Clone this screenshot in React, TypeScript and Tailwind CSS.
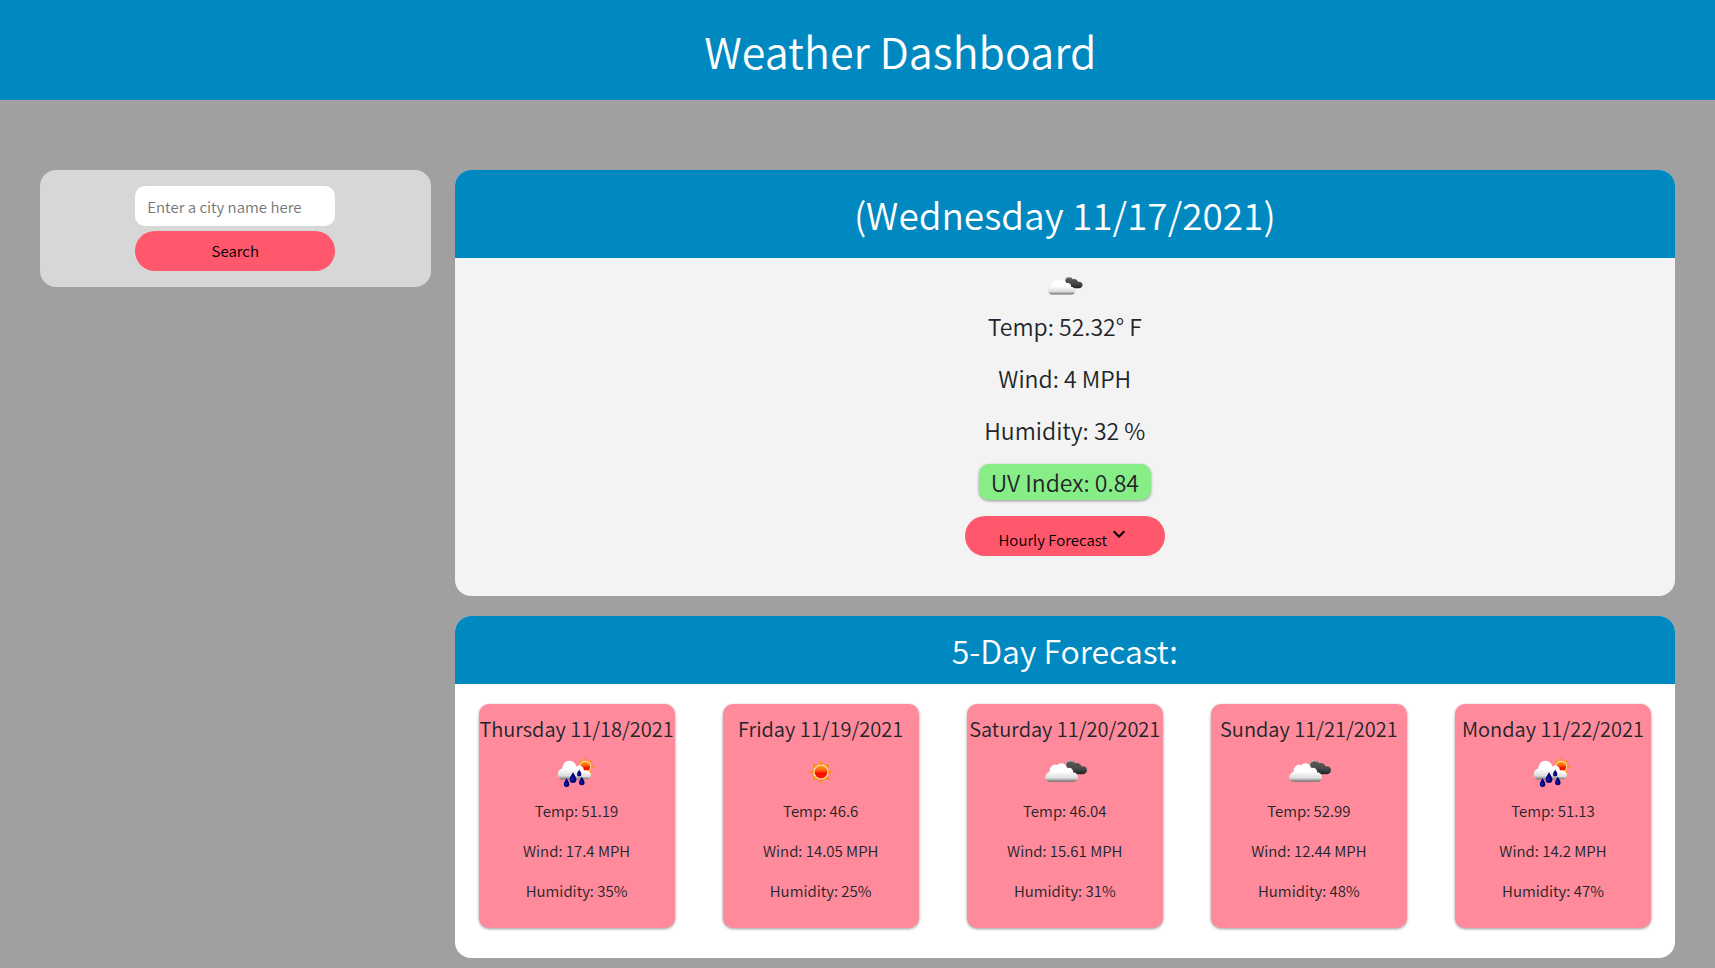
import { MdExpandMore } from "react-icons/md";

type IconKind = "rain" | "sun" | "clouds";

const days: { day: string; icon: IconKind; temp: string; wind: string; humidity: string }[] = [
  { day: "Thursday 11/18/2021", icon: "rain", temp: "51.19", wind: "17.4", humidity: "35" },
  { day: "Friday 11/19/2021", icon: "sun", temp: "46.6", wind: "14.05", humidity: "25" },
  { day: "Saturday 11/20/2021", icon: "clouds", temp: "46.04", wind: "15.61", humidity: "31" },
  { day: "Sunday 11/21/2021", icon: "clouds", temp: "52.99", wind: "12.44", humidity: "48" },
  { day: "Monday 11/22/2021", icon: "rain", temp: "51.13", wind: "14.2", humidity: "47" },
];

function Gradients() {
  return (
    <svg aria-hidden="true" className="absolute size-0">
      <defs>
        <linearGradient id="cloud" x1="0" y1="0" x2="0" y2="1">
          <stop offset="0.45" stopColor="#ffffff" />
          <stop offset="0.8" stopColor="#dcdcdc" />
          <stop offset="0.92" stopColor="#9a9a9a" />
          <stop offset="1" stopColor="#6a6a6a" />
        </linearGradient>
        <linearGradient id="dark" x1="0" y1="0" x2="0" y2="1">
          <stop offset="0" stopColor="#5c5c5c" />
          <stop offset="0.6" stopColor="#484848" />
          <stop offset="1" stopColor="#222222" />
        </linearGradient>
        <linearGradient id="sun" x1="0" y1="0" x2="0" y2="1">
          <stop offset="0" stopColor="#ff9a1f" />
          <stop offset="0.4" stopColor="#ff5a0a" />
          <stop offset="0.6" stopColor="#fb0800" />
          <stop offset="1" stopColor="#ff1c00" />
        </linearGradient>
      </defs>
    </svg>
  );
}

const rays = [0, 45, 90, 135, 180, 225, 270, 315];

function Sun({ x, y }: { x: number; y: number }) {
  return (
    <g transform={`translate(${x} ${y})`}>
      {rays.map((angle) => (
        <path key={angle} d="M-2.6 -7.2 L0 -11.4 L2.6 -7.2Z" fill="#ff9000" transform={`rotate(${angle})`} />
      ))}
      <circle r="7.6" fill="#ffe9a8" />
      <circle r="6.4" fill="url(#sun)" />
    </g>
  );
}

function Drop({ x, y, s }: { x: number; y: number; s: number }) {
  return (
    <g transform={`translate(${x} ${y}) scale(${s})`}>
      <path d="M0 -5.5 C.8 -3 3.4 -.8 3.4 1.9 A3.4 3.4 0 0 1 -3.4 1.9 C-3.4 -.8 -.8 -3 0 -5.5Z" fill="#00007a" />
      <ellipse cx="-.8" cy="1.6" rx="1.1" ry="1.6" fill="#1c28b8" />
    </g>
  );
}

function WeatherIcon({ kind, className }: { kind: IconKind; className: string }) {
  return (
    <svg viewBox="0 0 50 50" className={className} role="img" aria-label={kind}>
      {kind === "sun" && <Sun x={25} y={25} />}
      {kind === "clouds" && (
        <>
          <path
            d="M25.5 18.5 C25 12.8 34 11.6 35 16.4 C37.5 15 41 16.6 41.5 19.4 C44.5 18.6 47 20.4 47 23 C47 25.6 45 27.2 42.5 27.2 H34Z"
            fill="url(#dark)"
          />
          <path d="M25.8 18 C26 13.5 31.5 12.8 33.2 15.2" fill="none" stroke="#d8d8d8" strokeWidth="0.9" />
          <path
            d="M9.5 34.8 C6.8 34.8 5.2 32.8 5.2 30.3 C5.2 27.3 7.6 25.7 9.8 24.6 C9 20 13.5 16.4 17.2 18.2 C20 14.6 26.4 15.8 27.2 21.4 C30 19.6 33.6 22.4 33.2 25.6 C36.5 25.4 38 28.2 38 30.6 C38 33 36.4 34.8 34 34.8Z"
            fill="url(#cloud)"
          />
        </>
      )}
      {kind === "rain" && (
        <>
          <g transform="translate(33.2 19.8) scale(0.78)">
            <Sun x={0} y={0} />
          </g>
          <path
            d="M22 31 C20 26 21.5 18.6 27 18.4 C30 18.2 32 20.8 31.8 23.4 C35.5 22.4 39 24.4 39 27.6 C39 30.6 37 32.3 34 32.3 H24Z"
            fill="url(#cloud)"
          />
          <path
            d="M11 32.6 C8 32.6 5.8 30 5.8 27.2 C5.8 24.4 7.6 22 10.4 21.4 C10.4 17 13.4 13.8 17.4 13.8 C21.3 13.8 24 16.6 24.2 20 C26.4 21.2 27.5 23.6 27.5 26.4 C27.5 30.2 25 32.6 21.5 32.6Z"
            fill="url(#cloud)"
          />
          <Drop x={21} y={30.6} s={1} />
          <Drop x={27.2} y={26} s={0.65} />
          <Drop x={14.6} y={35.6} s={0.82} />
          <Drop x={29.8} y={34} s={0.82} />
        </>
      )}
    </svg>
  );
}

export default function App() {
  return (
    <div className="min-h-screen bg-[#a0a0a0] pb-2.5 font-['Noto_Sans_CJK_JP',sans-serif] font-[350] text-[#212529]">
      <Gradients />
      <header className="flex h-[100px] items-center justify-center bg-[#0088c0] pl-[5%] text-white">
        <h1 className="text-[43px] leading-14 font-[350]">Weather Dashboard</h1>
      </header>

      <div className="grid grid-cols-[24fr_75fr] items-start gap-6 px-10 pt-[70px]">
        <form
          className="flex flex-col items-center gap-[5px] rounded-2xl bg-[#d7d7d7] py-4"
          onSubmit={(event) => event.preventDefault()}
        >
          <input
            type="text"
            aria-label="City name"
            placeholder="Enter a city name here"
            className="h-10 w-[200px] rounded-[10px] bg-white px-3 text-[15px] outline-none placeholder:text-[#757575]"
          />
          <button type="submit" className="h-10 w-[200px] rounded-[20px] bg-[#ff576b] text-[15px] text-black">
            Search
          </button>
        </form>

        <main className="flex min-w-0 flex-col gap-5">
          <section className="overflow-hidden rounded-2xl bg-[#f3f3f3] pb-10 text-center">
            <h2 className="flex h-[88px] items-center justify-center bg-[#0088c0] text-[37px] leading-12 font-[350] text-white">
              (Wednesday 11/17/2021)
            </h2>
            <div className="flex flex-col items-center text-[23px] leading-9">
              <WeatherIcon kind="clouds" className="mt-2 mb-px size-[41px]" />
              <p className="mb-4">Temp: 52.32° F</p>
              <p className="mb-4">Wind: 4 MPH</p>
              <p className="mb-4">Humidity: 32 %</p>
              <p className="mb-4 rounded-[10px] bg-[#87ed87] px-3 shadow-[0_1px_3px_rgba(0,0,0,0.4)]">UV Index: 0.84</p>
              <button
                type="button"
                className="flex h-10 w-[200px] items-center justify-center rounded-[20px] bg-[#ff576b] text-[15px] text-black"
              >
                <span className="pt-2">Hourly Forecast</span>
                <MdExpandMore className="mb-1 size-6" />
              </button>
            </div>
          </section>

          <section className="overflow-hidden rounded-2xl bg-white pb-[30px] text-center">
            <h2 className="flex h-[68px] items-center justify-center bg-[#0088c0] text-[32px] leading-10 font-[350] text-white">
              5-Day Forecast:
            </h2>
            <div className="grid grid-cols-5 pt-5">
              {days.map((d) => (
                <article
                  key={d.day}
                  className="mx-6 flex flex-col items-center rounded-[10px] bg-[#ff8a9b] pt-[9px] pb-[25px] shadow-[0_1px_3px_rgba(0,0,0,0.4)]"
                >
                  <h3 className="text-xl leading-8 font-[350] whitespace-nowrap">{d.day}</h3>
                  <WeatherIcon kind={d.icon} className="my-0.5 size-[50px]" />
                  <p className="mb-4 text-[15px] leading-6">Temp: {d.temp}</p>
                  <p className="mb-4 text-[15px] leading-6">Wind: {d.wind} MPH</p>
                  <p className="text-[15px] leading-6">Humidity: {d.humidity}%</p>
                </article>
              ))}
            </div>
          </section>
        </main>
      </div>
    </div>
  );
}
